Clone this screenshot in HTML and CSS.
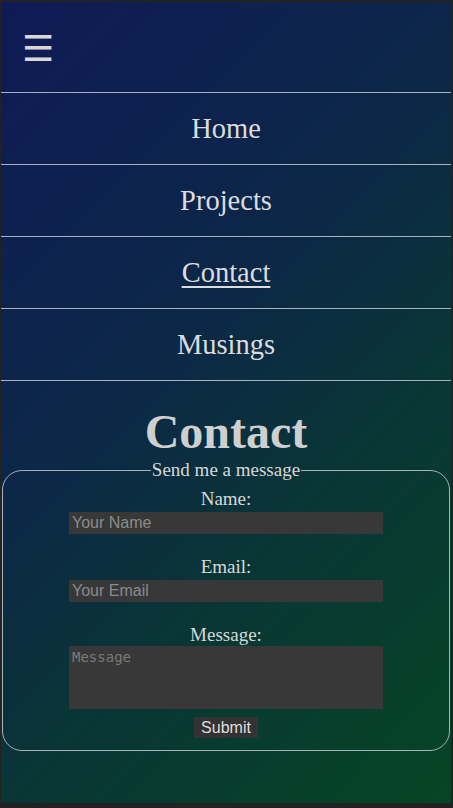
FILE: index.html
```html
<!DOCTYPE html>
<html lang="en">
<head>
<meta charset="utf-8">
<title>Contact</title>
<link rel="stylesheet" href="styles.css">
</head>
<body>
<div class="page">
  <header class="topbar">
    <span class="burger">&#9776;</span>
  </header>
  <nav class="menu">
    <a class="menu-item" href="#">Home</a>
    <a class="menu-item" href="#">Projects</a>
    <a class="menu-item current" href="#">Contact</a>
    <a class="menu-item" href="#">Musings</a>
  </nav>
  <main class="content">
    <h1 class="title">Contact</h1>
    <form class="form">
      <fieldset class="box">
        <legend class="legend">Send me a message</legend>
        <div class="field">
          <label class="label" for="name">Name:</label>
          <input class="input" id="name" type="text" placeholder="Your Name">
        </div>
        <div class="field">
          <label class="label" for="email">Email:</label>
          <input class="input" id="email" type="email" placeholder="Your Email">
        </div>
        <div class="field last">
          <label class="label" for="msg">Message:</label>
          <textarea class="textarea" id="msg" placeholder="Message"></textarea>
        </div>
        <button class="submit" type="button">Submit</button>
      </fieldset>
    </form>
  </main>
</div>
</body>
</html>
```

FILE: styles.css
```css
html {
  background: #222222;
}
body {
  margin: 0;
  font-family: "Liberation Serif", "Times New Roman", serif;
  color: #d4d4d4;
}
.page {
  margin: 2px 2px 0 1px;
  height: 801px;
  background: linear-gradient(135deg, #0f1a56 0%, #0c2748 40%, #093635 65%, #064524 100%);
  display: flex;
  flex-direction: column;
}
.topbar {
  height: 90px;
  display: flex;
  align-items: center;
  padding-left: 21px;
  padding-top: 4px;
  box-sizing: border-box;
}
.burger {
  font-family: "DejaVu Sans", sans-serif;
  font-size: 36px;
  line-height: 1;
  color: #d8d8d8;
}
.menu {
  display: flex;
  flex-direction: column;
  border-bottom: 1px solid #a8b2be;
}
.menu-item {
  height: 71px;
  border-top: 1px solid #a8b2be;
  display: flex;
  align-items: center;
  justify-content: center;
  font-size: 28.5px;
  color: #dcdcdc;
  text-decoration: none;
}
.menu-item.current {
  text-decoration: underline;
  text-underline-offset: 4px;
}
.content {
  display: flex;
  flex-direction: column;
}
.title {
  margin: 24px 0 0;
  text-align: center;
  font-size: 48px;
  line-height: 54px;
  font-weight: bold;
  color: #cfcfcf;
}
.form {
  margin: 0;
}
.box {
  margin: 0 1px;
  border: 1.5px solid #a8b0b8;
  border-radius: 20px;
  padding: 7px 0 12px;
  display: flex;
  flex-direction: column;
  align-items: center;
}
.legend {
  margin: 0 auto;
  padding: 0 1px;
  font-size: 19px;
  line-height: 22px;
  color: #d8d8d8;
}
.field {
  width: 314px;
  display: flex;
  flex-direction: column;
  align-items: center;
  margin-bottom: 22px;
}
.field.last {
  margin-bottom: 8px;
}
.label {
  font-size: 19px;
  line-height: 22px;
  color: #d8d8d8;
  margin-bottom: 2px;
}
.field.last .label {
  margin-bottom: 0;
}
.input {
  box-sizing: border-box;
  width: 100%;
  height: 22px;
  border: none;
  background: #383838;
  color: #ddd;
  padding: 0 3px;
  font-family: "Liberation Sans", Arial, sans-serif;
  font-size: 16px;
}
.input::placeholder {
  color: #8a8a8a;
}
.textarea {
  box-sizing: border-box;
  width: 100%;
  height: 63px;
  border: none;
  background: #383838;
  color: #ddd;
  padding: 3px;
  font-family: "DejaVu Sans Mono", monospace;
  font-size: 14px;
  resize: none;
}
.textarea::placeholder {
  color: #7a7a7a;
}
.submit {
  border: none;
  background: #333333;
  color: #dedede;
  font-family: "Liberation Sans", Arial, sans-serif;
  font-size: 16px;
  padding: 1px 7px;
  height: 21px;
  line-height: 19px;
}
```
